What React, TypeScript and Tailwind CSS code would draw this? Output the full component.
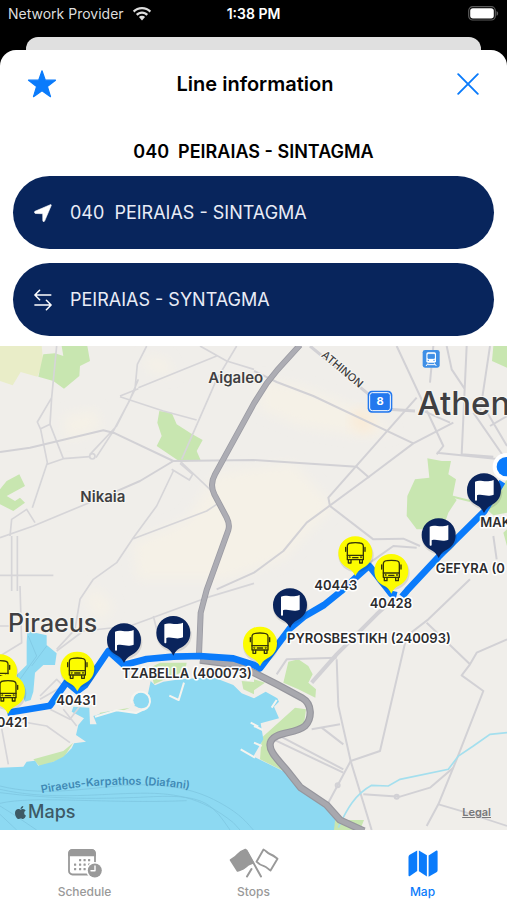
import type { ReactNode } from 'react';

type Pin = {
  id: string;
  kind: 'flag' | 'bus';
  x: number;
  y: number;
};

type MapLabel = {
  text: string;
  x: number;
  y: number;
};

const ROUTE =
  'M22 1100 L150 1079 L200 1008 L232 1035 L255 1018 L325 915 L372 957 L440 939 L520 932 L600 930 L700 937 L762 957 L780 967 L870 847 L912 812 L972 777 L1024 735 L1068 694 L1107 659 L1140 700 L1174 744 L1190 748';

const ROUTE_EAST = 'M1206 752 L1222 733 L1316 632 L1452 497 L1507 407';

const PINS: Pin[] = [
  { id: 'makri', kind: 'flag', x: 1452, y: 432 },
  { id: 'gefyra', kind: 'flag', x: 1316, y: 567 },
  { id: '40443', kind: 'bus', x: 1066, y: 621 },
  { id: '40428', kind: 'bus', x: 1174, y: 674 },
  { id: 'pyrosbestikh', kind: 'flag', x: 870, y: 777 },
  { id: 'faliro', kind: 'bus', x: 780, y: 892 },
  { id: 'tzabella', kind: 'flag', x: 372, y: 882 },
  { id: 'tzabella-east', kind: 'flag', x: 520, y: 860 },
  { id: '40431', kind: 'bus', x: 232, y: 967 },
  { id: 'port', kind: 'bus', x: 0, y: 975 },
  { id: '40421', kind: 'bus', x: 24, y: 1035 },
];

const STOP_LABELS: MapLabel[] = [
  { text: 'MAK', x: 1441, y: 543 },
  { text: 'GEFYRA (0', x: 1307, y: 680 },
  { text: '40443', x: 943, y: 731 },
  { text: '40428', x: 1109, y: 786 },
  { text: 'PYROSBESTIKH (240093)', x: 861, y: 890 },
  { text: 'TZABELLA (400073)', x: 366, y: 996 },
  { text: '40431', x: 169, y: 1078 },
  { text: '0421', x: -10, y: 1142 },
];

const WifiIcon = () => (
  <svg viewBox="0 0 20 15" className="h-[14px] w-5" fill="currentColor" aria-hidden="true">
    <path d="M10 0C6.200 0 2.700 1.500.2 4l1.700 1.900C4 3.800 6.900 2.500 10 2.500s6 1.300 8.100 3.400L19.800 4C17.300 1.500 13.800 0 10 0Z" />
    <path d="M10 4.700c-2.500 0-4.800 1-6.500 2.700l1.800 1.900C6.500 8 8.200 7.200 10 7.200S13.500 8 14.700 9.300l1.800-1.900C14.800 5.700 12.500 4.700 10 4.700Z" />
    <path d="M10 9.400c-1.300 0-2.400.5-3.300 1.300L10 14.400l3.300-3.700c-.9-.8-2-1.300-3.300-1.300Z" />
  </svg>
);

const BatteryIcon = () => (
  <svg viewBox="0 0 31 15" className="h-[15px] w-[31px]" aria-hidden="true">
    <rect x="0.700" y="0.700" width="26.600" height="13.300" rx="4" fill="none" stroke="#5b5b5b" strokeWidth="1.200" />
    <rect x="2.200" y="2.200" width="23.600" height="10.300" rx="2.700" fill="#fff" />
    <path d="M28.500 5v4.800c1-.4 1.600-1.300 1.600-2.400S29.500 5.400 28.500 5Z" fill="#5b5b5b" />
  </svg>
);

const StarIcon = () => (
  <svg viewBox="0 0 30 30" className="h-[30px] w-[30px]" fill="currentColor" aria-hidden="true">
    <path
      d="M15 1.800 18.300 11.200H28.500L20.400 17.400 23.500 27.700 15 21.700 6.500 27.700 9.600 17.400 1.500 11.200H11.700Z"
      stroke="currentColor"
      strokeWidth="1.200"
      strokeLinejoin="round"
    />
  </svg>
);

const CloseIcon = () => (
  <svg viewBox="0 0 22 22" className="h-[22px] w-[22px]" fill="none" stroke="currentColor" strokeWidth="1.900" strokeLinecap="round" aria-hidden="true">
    <path d="M1.200 1.200 20.800 20.800M20.800 1.200 1.200 20.800" />
  </svg>
);

const LocationIcon = () => (
  <svg viewBox="0 0 18 18" className="h-[18px] w-[18px]" fill="currentColor" aria-hidden="true">
    <path d="M.9 7.300 16.300.7c.7-.3 1.200.2.900.9L10.600 17.100c-.5 1-1.800.8-1.800-.4l-.1-7-7-.2C.4 9.400.1 7.800.9 7.300Z" stroke="currentColor" strokeWidth="0.600" />
  </svg>
);

const SwapIcon = () => (
  <svg viewBox="0 0 18 22" className="h-[22px] w-[18px]" fill="none" stroke="currentColor" strokeWidth="1.500" strokeLinecap="round" strokeLinejoin="round" aria-hidden="true">
    <path d="M16.800 6H1M5.600 1.200.9 6l4.700 4.700" />
    <path d="M.9 16h16M12.400 11.300 17.100 16l-4.700 4.700" />
  </svg>
);

const ScheduleIcon = () => (
  <svg viewBox="0 0 34 29" className="h-[29px] w-[34px]" aria-hidden="true">
    <rect x="1" y="1" width="26" height="24.500" rx="3.500" fill="none" stroke="currentColor" strokeWidth="1.800" />
    <path d="M.2 7.300V4C.2 1.700 1.700.2 4 .2h20c2.300 0 3.800 1.500 3.800 3.800v3.300Z" fill="currentColor" />
    <g fill="currentColor">
      {[
        [11, 10], [15.500, 10], [20, 10],
        [6, 14.500], [11, 14.500], [15.500, 14.500], [20, 14.500],
        [6, 19], [11, 19], [15.500, 19],
      ].map(([x, y]) => (
        <rect key={`${x}-${y}`} x={x} y={y} width="2.200" height="2.200" rx="0.500" />
      ))}
    </g>
    <circle cx="26.800" cy="21.500" r="8.500" fill="#fff" />
    <circle cx="26.800" cy="21.500" r="7" fill="currentColor" />
    <path d="M27 17v4.700h-4" fill="none" stroke="#fff" strokeWidth="1.400" strokeLinecap="round" strokeLinejoin="round" />
  </svg>
);

const StopsIcon = () => (
  <svg viewBox="0 0 50 30" className="h-[30px] w-[50px]" fill="none" stroke="currentColor" strokeLinecap="round" strokeLinejoin="round" aria-hidden="true">
    <path d="M17.500 2.500 32 28.500M22.500 21 18 28.500" strokeWidth="2" />
    <path
      d="M1.500 12C4.500 10 6 9.500 8.500 6.500 11 3.500 13 2.800 16.500 1.500L24.300 15c-3.500 1-5.500 1.500-7.800 4.200-2.300 2.500-4.200 2.500-8 3.800Z"
      fill="currentColor"
      strokeWidth="1.600"
    />
    <path d="M34.500 1.500c2.800 1.200 3.500 3.500 6.300 4.500 3 1 4.700 2.300 7.700 4.800L41.500 22.500c-2.500-1.500-3.800-3.500-6.500-4.300-3-.8-4.800-1.700-7.500-4.500Z" strokeWidth="1.900" />
  </svg>
);

const MapIcon = () => (
  <svg viewBox="0 0 30 27" className="h-[27px] w-[30px]" fill="currentColor" aria-hidden="true">
    <path d="M9.200.5v20.400L2 25.900c-.9.700-1.500.2-1.500-.7V7c0-1 .4-1.700 1.200-2.300Z" />
    <path d="M10.900.5 18.900 5.200v21.300l-8-5.200Z" />
    <path d="M20.600 5.600 28 .8c.9-.6 1.600-.2 1.600.8v18.700c0 .9-.4 1.500-1.100 2l-7.900 4.500Z" />
  </svg>
);

const AppleIcon = () => (
  <svg viewBox="0 0 384 512" className="h-[15px] w-[13px]" fill="currentColor" aria-hidden="true">
    <path d="M319 269c0-37 16-65 50-85-19-27-47-42-85-45-35-3-74 21-88 21-15 0-49-20-76-20C64 141 4 185 4 274c0 26 5 54 14 82 13 37 59 127 107 125 25-1 43-18 76-18 32 0 48 18 76 18 49-1 90-82 102-119-65-31-60-90-60-93ZM262 105c27-32 25-62 24-73-24 1-52 16-68 35-17 20-28 44-25 71 26 2 50-11 69-33Z" />
  </svg>
);

function StopPin({ kind, x, y }: Omit<Pin, 'id'>) {
  const fill = kind === 'flag' ? '#0a245c' : '#fcfc00';
  return (
    <g transform={`translate(${x} ${y})`}>
      <ellipse cx="2" cy="7" rx="53" ry="51" fill="#000" opacity="0.100" />
      <path d="M0 -50A50 50 0 0 1 51 0C51 26 36 39 19 47C11 51 6 58 0 69C-6 58 -11 51 -19 47C-36 39 -51 26 -51 0A50 50 0 0 1 0 -50Z" fill={fill} />
      {kind === 'flag' ? (
        <path d="M-27 -25C-10 -33 2 -20 29 -30V14C8 23 -4 10 -21 16V29C-21 33 -27 33 -27 29Z" fill="#fff" />
      ) : (
        <g fill="none" stroke="#35350a" strokeWidth="4" strokeLinecap="round" strokeLinejoin="round">
          <path d="M-24 -20Q-24 -29 -14 -30 0 -32 14 -30 24 -29 24 -20V20H-24Z" />
          <path d="M-24 7H24M-8 14H8M-29 -17V-5M29 -17V-5" />
          <path d="M-21 21V30H-13V21M13 21V30H21V21" />
          <circle cx="-17" cy="13" r="1" />
          <circle cx="17" cy="13" r="1" />
        </g>
      )}
    </g>
  );
}

function RouteMap() {
  return (
    <svg
      viewBox="0 0 1521 1452"
      preserveAspectRatio="xMidYMid slice"
      className="absolute inset-0 h-full w-full font-['Inter','Liberation_Sans',sans-serif]"
      role="img"
      aria-label="Map of line 040 from Piraeus to Athens"
    >
      <defs>
        <filter id="soft" x="-20%" y="-20%" width="140%" height="140%">
          <feGaussianBlur stdDeviation="18" />
        </filter>
      </defs>
      <rect width="1521" height="1452" fill="#f0eeea" />

      {/* built-up areas */}
      <g fill="#f5f1e7" filter="url(#soft)">
        <path d="M430 30 500 40 520 90 450 75ZM190 210 290 190 300 250 200 280ZM650 380 880 350 1000 480 850 640 680 700 410 700 400 590 560 520Z" />
        <path d="M780 100 900 120 1110 200 1180 260 1080 270 900 240 780 190Z" />
        <path d="M280 720 340 780 300 830 260 770Z" />
      </g>
      <path d="M1060 195 1100 185 1125 240 1100 265 1050 240Z" fill="#f9ebd8" filter="url(#soft)" />

      {/* parks */}
      <path d="M0 0H125L130 50 112 92 62 78 38 118 0 105Z" fill="#e9edc8" />
      <g fill="#c8e6b0">
        <path d="M130 25 165 22 190 30 185 0H262L270 45 240 60 238 90 192 128 160 105 115 92Z" />
        <path d="M478 195 515 200 530 235 572 262 608 282 590 315 602 343 540 347 470 300 485 270 472 230Z" />
        <path d="M0 430 20 405 58 385 75 420 20 450 45 465 60 455 75 470 40 495 0 475Z" />
        <path d="M1480 0H1521V65L1476 45ZM1282 337 1325 345 1353 345 1345 385 1368 400 1358 450 1370 462 1345 500 1328 550 1250 550 1220 510 1222 450 1245 400 1288 395Z" />
        <path d="M1521 400V500L1480 508 1460 490ZM1510 560 1521 550V600Z" />
        <path d="M865 947 895 940 925 960 938 985 925 1010 948 1030 946 1055 895 1030 850 1010Z" />
        <path d="M762 1000 795 1010 762 1033ZM885 1085 918 1090 910 1150 810 1170 800 1190 880 1290 780 1240 785 1175Z" />
        <path d="M450 965 480 950H560L555 975 490 1002 462 1015ZM725 1005 762 1008V1045L730 1030Z" />
        <path d="M1000 1422H1092L1080 1452H1000Z" />
      </g>
      <path d="M300 1100 390 1085 350 1102 290 1120ZM100 1240 190 1215 220 1190 190 1237 120 1262Z" fill="#c8e6b0" />

      {/* sea */}
      <g fill="#8dd9f2">
        <path d="M0 1265 70 1262 80 1247 105 1244 115 1259 160 1247 190 1232 215 1207 222 1192 258 1187 228 1167 235 1137 252 1117 215 1097 220 1082 268 1085 270 1135 290 1135 280 1110 320 1098 350 1092 410 1102 440 1085 402 1080 442 1052 452 1005 465 1018 490 1007 540 1000 640 994 700 1017 725 1042 762 1057 797 1037 832 1057 837 1067 822 1082 837 1117 782 1132 790 1180 762 1228 762 1232 862 1282 887 1317 912 1342 972 1377 1007 1407 1002 1452H0Z" />
        <path d="M82 855 140 868 140 897 170 922 165 957 130 957 105 980 100 1037 92 1062 75 1067 60 1027 50 987 80 957 80 887Z" />
        <circle cx="424" cy="1063" r="24" />
      </g>
      <g fill="none" stroke="#f5f4ef" strokeWidth="6" strokeLinejoin="round">
        <path d="M508 1049 536 1062 552 1010M752 1130 775 1142M722 1210 765 1235M815 1085 830 1062M762 1140 788 1152M762 1190 785 1200" />
        <path d="M285 1112 350 1093 408 1101 442 1085M395 1072A28 28 0 1 1 430 1092" />
      </g>
      <g fill="none" stroke="#74b9d5" strokeWidth="2" opacity="0.700">
        <path d="M0 1320C120 1350 240 1330 350 1320S560 1320 640 1360 740 1430 760 1452" />
        <path d="M0 1330C140 1362 280 1345 400 1342S600 1350 700 1430L720 1452" />
        <path d="M0 1340C160 1360 300 1360 460 1352S640 1380 690 1452" />
        <path d="M0 1372C100 1348 320 1374 560 1364" />
        <path d="M0 1380 40 1405 110 1452M0 1405 50 1452" />
        <path d="M85 870 110 930 60 1000M140 900 95 960" />
      </g>

      {/* side streets */}
      <g fill="none" stroke="#d6d5d8" strokeWidth="5" strokeLinejoin="round">
        <path d="M170 0 155 155 112 228 122 250 142 350 97 485M155 155 150 235 122 248M150 235 190 338 142 355M190 338 270 332M440 0 412 55 405 130 350 240 270 325M415 100 388 165 340 255 288 335" />
        <path d="M415 125 650 30M600 0 680 45 762 70M710 0 650 100 545 340M360 152 490 195 590 222M360 150 415 128" />
        <path d="M520 375 470 480 400 575 350 650 280 700 240 760 225 850 170 910M400 578 620 495 650 475M540 345 640 440M515 370 568 402 578 385 540 352" />
        <path d="M0 575 100 540 340 440M30 570 35 520 80 490 105 530M35 570V735M52 570V735M0 688H160" />
        <circle cx="277" cy="331" r="8" />
        <path d="M170 915 250 855 390 840 620 755 762 712M460 810 475 870M60 720 65 890 0 930M0 840H30" />
        <path d="M120 1060 190 1020 170 1000 120 1050M240 1080 210 1120 150 1090M190 1090 230 1140M0 1120 25 1255M25 1120 140 1140 210 1190" />
      </g>
      <g fill="none" stroke="#d2d1d5" strokeWidth="6" strokeLinejoin="round">
        <path d="M0 318 90 305 310 253 345 262 520 345 762 342 1070 362 1108 395M340 440 420 405 520 345M762 75 830 108 940 150 1240 292" />
        <path d="M930 0 1100 140 1165 190 1245 195" strokeWidth="9" />
        <path d="M1360 230 1240 292 1110 390 920 530 850 615 762 680 650 730" />
        <path d="M1250 155 985 455 990 480 1120 580 1210 578 1260 600M1190 0 1330 300 1310 325M1300 0 1290 110M1340 0 1355 70 1395 130M1400 0 1385 325M1470 0 1440 200M1385 325 1480 332M1310 320 1500 340" />
        <path d="M1110 650 1180 600 1250 605M1260 190 1350 230M1420 200 1510 330M1450 180 1521 300M1470 240 1521 210M1480 570 1490 640" />
        <path d="M1350 450 1410 465" stroke="#c8e6b0" />
        <path d="M1180 760 1130 805 1010 925 935 1010" strokeWidth="12" />
        <path d="M1410 700 1285 820 1220 870 1140 1215 1052 1245 985 1370M1280 830 1410 955 1385 988 1450 1035 1370 1240 1315 1375 1280 1440M1410 955 1430 920 1521 880" />
        <path d="M1010 940 1015 1080 1052 1245 1115 1452M830 985 860 940 1010 935M935 1150 1020 1135M965 1145 1030 1195M820 1180 1030 1280M830 1165 1030 1270M1090 1345 1200 1352 1290 1325 1360 1265" />
        <path d="M1316 1375 1400 1400 1521 1440" strokeWidth="5" />
        <circle cx="1190" cy="1352" r="6" />
        <circle cx="1013" cy="1318" r="6" />
      </g>
      <path d="M1015 1445C1040 1390 1065 1345 1115 1318L1165 1320 1200 1300 1345 1270 1375 1230 1420 1200 1470 1165 1521 1160" fill="none" stroke="#a4dfee" strokeWidth="5" />

      {/* motorways */}
      <g fill="none" strokeLinejoin="round">
        <path d="M900 -3 832 72 800 112 762 172 645 385Q628 415 643 445L680 515Q690 535 685 552L620 732 602 800 597 925" stroke="#9b9ba3" strokeWidth="18" />
        <path d="M900 -3 832 72 800 112 762 172 645 385Q628 415 643 445L680 515Q690 535 685 552L620 732 602 800 597 925" stroke="#adadb4" strokeWidth="13" />
        <path d="M600 942 700 955 762 980 830 1015 905 1055C940 1075 935 1120 915 1140C885 1165 830 1155 813 1185C797 1215 850 1255 870 1285L902 1325 980 1377 1020 1422 1092 1455" stroke="#96969d" strokeWidth="22" />
        <path d="M600 942 700 955 762 980 830 1015 905 1055C940 1075 935 1120 915 1140C885 1165 830 1155 813 1185C797 1215 850 1255 870 1285L902 1325 980 1377 1020 1422 1092 1455" stroke="#a8a8ae" strokeWidth="15" />
      </g>

      {/* places */}
      <g fill="#3f3f42" stroke="#f6f5f1" strokeWidth="7" strokeLinejoin="round" className="[paint-order:stroke]">
        <text x="625" y="110" className="text-[45px] font-semibold">Aigaleo</text>
        <text x="241" y="469" className="text-[45px] font-semibold">Nikaia</text>
        <text x="1252" y="208" className="text-[99px] font-medium">Athen</text>
        <text x="24" y="858" className="text-[75px] font-medium">Piraeus</text>
        <text transform="translate(962 30) rotate(40)" className="text-[33px] font-medium">ATHINON</text>
      </g>
      <path id="ferry" d="M125 1342Q370 1292 620 1338" fill="none" />
      <text fill="#4089b5" className="text-[33px] font-semibold">
        <textPath href="#ferry">Piraeus-Karpathos (Diafani)</textPath>
      </text>

      <g>
        <rect x="1103" y="134" width="74" height="66" rx="13" fill="#2378ee" />
        <rect x="1109" y="140" width="62" height="54" rx="8" fill="none" stroke="#fff" strokeWidth="3" />
        <text x="1140" y="178" textAnchor="middle" fill="#fff" className="text-[33px] font-bold">8</text>
      </g>
      <g>
        <rect x="1268" y="12" width="51" height="53" rx="7" fill="#3f8fe6" />
        <path d="M1284 19H1303Q1308 19 1308 24V46Q1308 50 1303 50H1284Q1279 50 1279 46V24Q1279 19 1284 19Z" fill="#fff" />
        <path d="M1284 25H1303V37H1284ZM1283 43H1287M1300 43H1304" fill="#3f8fe6" stroke="#3f8fe6" strokeWidth="3" />
        <path d="M1284 52 1278 60M1303 52 1309 60M1282 56H1305" stroke="#fff" strokeWidth="3" />
      </g>

      <g fill="none" stroke="#0a7bfb" strokeWidth="20" strokeLinejoin="round">
        <path d={ROUTE} />
        <path d={ROUTE_EAST} />
      </g>
      <circle cx="1519" cy="362" r="41" fill="#fff" />
      <circle cx="1519" cy="362" r="29" fill="#0a7bfb" />

      {PINS.map((pin) => (
        <StopPin key={pin.id} kind={pin.kind} x={pin.x} y={pin.y} />
      ))}

      <g fill="#2c2c2e" stroke="#fff" strokeWidth="9" strokeLinejoin="round" className="text-[39px] font-semibold [paint-order:stroke]">
        {STOP_LABELS.map((label) => (
          <text key={label.text} x={label.x} y={label.y}>{label.text}</text>
        ))}
      </g>
    </svg>
  );
}

function DirectionButton({ icon, children }: { icon: ReactNode; children: ReactNode }) {
  return (
    <button type="button" className="flex h-[73px] w-full items-center gap-[18px] rounded-full bg-[#08255c] px-[21px] text-left text-lg text-[#e8ecf6]">
      <span className="flex w-[18px] justify-center text-white">{icon}</span>
      <span className="whitespace-pre">{children}</span>
    </button>
  );
}

function TabButton({ icon, label, active = false }: { icon: ReactNode; label: string; active?: boolean }) {
  return (
    <button
      type="button"
      aria-current={active ? 'page' : undefined}
      className={`flex flex-1 flex-col items-center gap-1.5 text-xs font-medium ${active ? 'text-[#0a7bfb]' : 'text-[#999999]'}`}
    >
      <span className="flex h-[30px] items-center">{icon}</span>
      <span>{label}</span>
    </button>
  );
}

export default function App() {
  return (
    <div className="flex min-h-screen flex-col bg-black font-['Inter','Liberation_Sans',sans-serif]">
      <div className="grid h-[37px] grid-cols-3 items-start px-2 pt-1 text-sm leading-5 text-white">
        <div className="flex items-center gap-2 whitespace-nowrap text-[#dddddd]">
          Network Provider
          <WifiIcon />
        </div>
        <div className="text-center font-semibold">1:38 PM</div>
        <div className="flex justify-end pt-0.5">
          <BatteryIcon />
        </div>
      </div>
      <div className="mx-[26px] h-[13px] rounded-t-xl bg-[#e0e0e0]" />

      <div className="flex flex-1 flex-col overflow-hidden rounded-t-2xl bg-white">
        <header className="flex h-[68px] items-center justify-between pr-6 pl-[27px]">
          <button type="button" aria-label="Favorite" className="flex w-[30px] justify-center text-[#0a7bfb]">
            <StarIcon />
          </button>
          <h1 className="text-xl font-semibold text-black">Line information</h1>
          <button type="button" aria-label="Close" className="flex w-[30px] justify-center text-[#0a7bfb]">
            <CloseIcon />
          </button>
        </header>

        <h2 className="mt-5 whitespace-pre text-center text-lg leading-7 font-semibold text-black">040  PEIRAIAS - SINTAGMA</h2>

        <div className="flex flex-col gap-3.5 px-[13px] pt-2.5 pb-2.5">
          <DirectionButton icon={<LocationIcon />}>040  PEIRAIAS - SINTAGMA</DirectionButton>
          <DirectionButton icon={<SwapIcon />}>PEIRAIAS - SYNTAGMA</DirectionButton>
        </div>

        <main className="relative min-h-[400px] flex-1 overflow-hidden">
          <RouteMap />
          <div className="absolute bottom-1.5 left-3.5 flex items-center gap-px text-lg leading-6 font-medium text-[#3d5a66]">
            <AppleIcon />
            Maps
          </div>
          <a href="#legal" className="absolute right-4 bottom-2.5 text-[11px] leading-4 font-semibold text-[#78787a] underline">
            Legal
          </a>
        </main>

        <nav className="flex h-[70px] items-start bg-white pt-[18px]">
          <TabButton icon={<ScheduleIcon />} label="Schedule" />
          <TabButton icon={<StopsIcon />} label="Stops" />
          <TabButton icon={<MapIcon />} label="Map" active />
        </nav>
      </div>
    </div>
  );
}
